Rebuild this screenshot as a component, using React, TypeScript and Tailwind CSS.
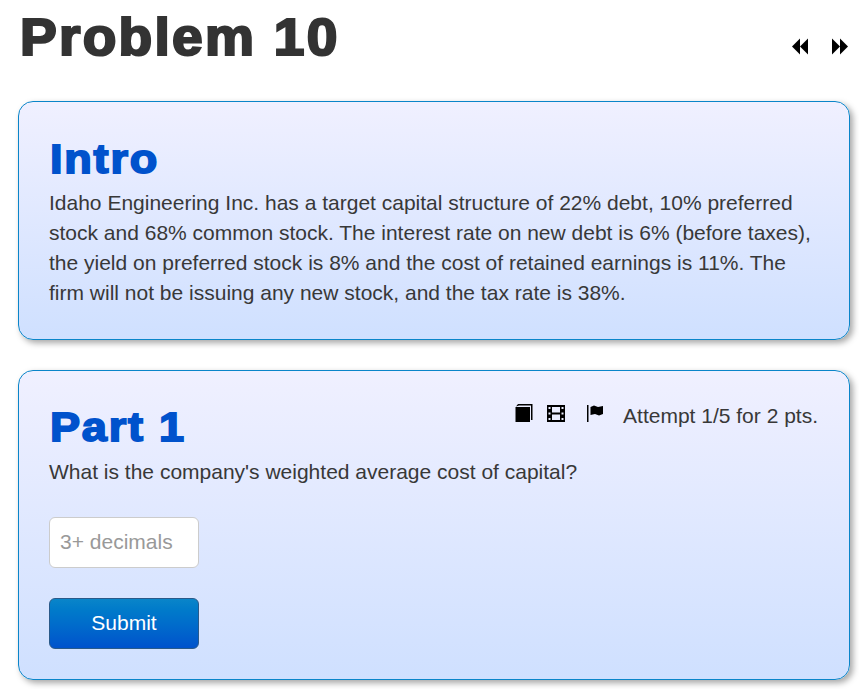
function BookIcon() {
  return (
    <svg width="18" height="18" viewBox="0 0 18 18" fill="#000">
      <path d="M3 0 H17.5 V16 H16 V1.5 H4 L1 2.5 Z" />
      <path d="M0.5 3 H15 V18 H0.5 Z" />
    </svg>
  );
}

function FilmIcon() {
  return (
    <svg width="18" height="17" viewBox="0 0 18 17" fill="#000">
      <path
        fillRule="evenodd"
        d="M0 0 H18 V17 H0 Z M1.5 2 V4 H3.5 V2 Z M1.5 7.5 V9.5 H3.5 V7.5 Z M1.5 13 V15 H3.5 V13 Z M14.5 2 V4 H16.5 V2 Z M14.5 7.5 V9.5 H16.5 V7.5 Z M14.5 13 V15 H16.5 V13 Z M5 2 V7.5 H13 V2 Z M5 9.5 V15 H13 V9.5 Z"
      />
    </svg>
  );
}

function FlagIcon() {
  return (
    <svg width="17" height="17" viewBox="0 0 17 17" fill="#000">
      <path d="M0 0 H1.5 V17 H0 Z" />
      <path d="M3.5 2 L7 0.5 L11 2 L16 1 V9 L12 10.5 L8 9 L3.5 10 Z" />
    </svg>
  );
}

function Arrows({ flip }: { flip?: boolean }) {
  return (
    <svg width="16" height="17" viewBox="0 0 16 17" fill="#000" className={flip ? 'rotate-180' : ''}>
      <path d="M0 8.5 L8 0.5 V16.5 Z" />
      <path d="M8 8.5 L16 0.5 V16.5 Z" />
    </svg>
  );
}

export default function App() {
  return (
    <div className="min-h-screen bg-white pl-[18px] pr-[9px] text-[#383838] font-['Liberation_Sans',Arial,sans-serif]">
      <div className="flex items-start justify-between h-[101px]">
        <h1 className="ml-[2px] mt-[8px] origin-left scale-x-[1.08] text-[51px] leading-[60px] font-bold tracking-[2.1px] text-[#333] [-webkit-text-stroke:2.2px_#333]">
          Problem 10
        </h1>
        <div className="flex gap-[24px] pt-[38px] pr-[2px]">
          <Arrows />
          <Arrows flip />
        </div>
      </div>

      {/* Intro */}
      <section className="h-[239px] rounded-[15px] border border-[#0a85c9] bg-gradient-to-b from-[#f0f0ff] to-[#cfe0ff] px-[30px] pt-[30px] shadow-[3px_3px_6px_rgba(0,0,0,0.35)]">
        <h2 className="h-[56px] w-fit ml-[1px] origin-left scale-x-[1.1] text-[41px] leading-[54px] font-bold tracking-[1.6px] text-[#0052cc] [-webkit-text-stroke:1.8px_#0052cc]">
          Intro
        </h2>
        <p className="text-[21px] leading-[30px]">
          Idaho Engineering Inc. has a target capital structure of 22% debt, 10% preferred stock and 68% common stock.
          The interest rate on new debt is 6% (before taxes), the yield on preferred stock is 8% and the cost of
          retained earnings is 11%. The firm will not be issuing any new stock, and the tax rate is 38%.
        </p>
      </section>

      {/* Part 1 */}
      <section className="mt-[30px] h-[310px] rounded-[15px] border border-[#0a85c9] bg-gradient-to-b from-[#f0f0ff] to-[#cfe0ff] px-[30px] pt-[28px] shadow-[3px_3px_6px_rgba(0,0,0,0.35)]">
        <div className="flex h-[58px] items-start justify-between">
          <h2 className="ml-[1px] mt-[1px] origin-left scale-x-[1.1] text-[41px] leading-[54px] font-bold tracking-[1.6px] text-[#0052cc] [-webkit-text-stroke:1.8px_#0052cc]">
            Part 1
          </h2>
          <div className="flex items-start pr-[1px] pt-[2px] text-[21px] leading-[30px]">
            <span className="mt-[3px]"><BookIcon /></span>
            <span className="ml-[14px] mt-[4px]"><FilmIcon /></span>
            <span className="ml-[22px] mt-[4px]"><FlagIcon /></span>
            <span className="ml-[19px]">Attempt 1/5 for 2 pts.</span>
          </div>
        </div>
        <p className="text-[21px] leading-[30px]">What is the company's weighted average cost of capital?</p>
        <input
          placeholder="3+ decimals"
          className="mt-[30px] block h-[51px] w-[150px] rounded-[6px] border border-[#ccc] bg-white px-[10px] pb-[2px] text-[21px] placeholder:text-[#999] outline-none"
        />
        <button className="mt-[30px] block h-[51px] w-[150px] rounded-[6px] border border-[#2a5a8a] bg-gradient-to-b from-[#0a85c9] to-[#0052cc] pb-[2px] text-[21px] text-white">
          Submit
        </button>
      </section>
    </div>
  );
}
